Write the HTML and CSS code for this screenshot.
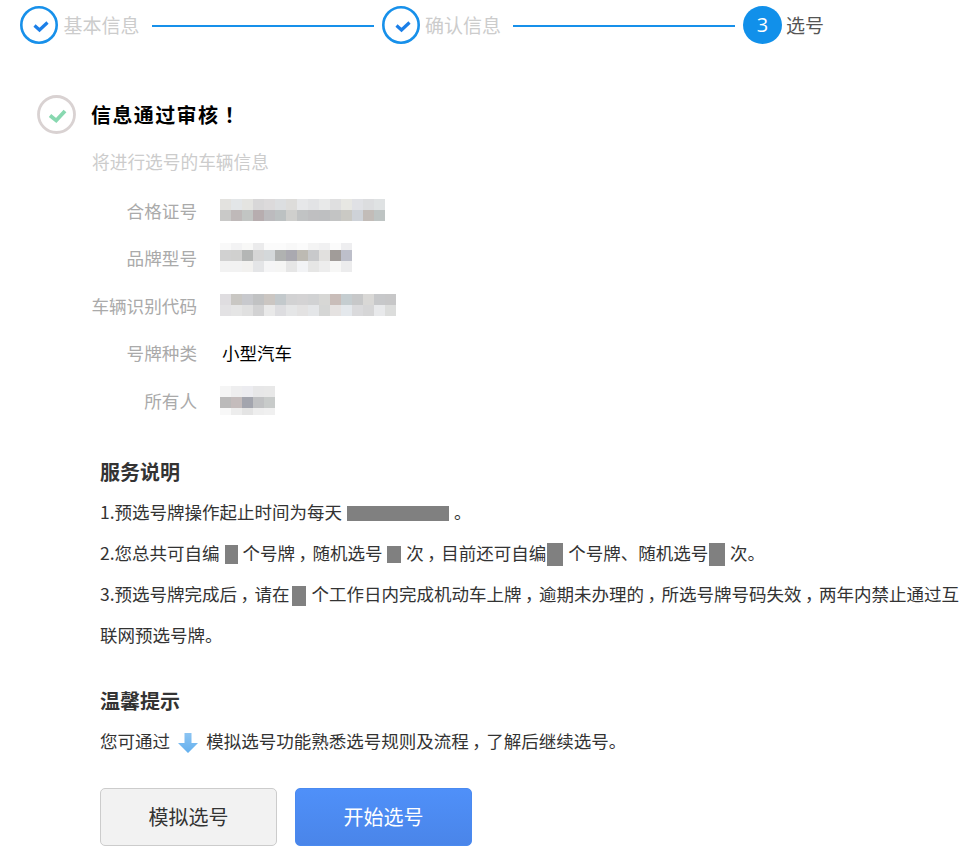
FILE: index.html
```html
<!DOCTYPE html>
<html lang="zh-CN">
<head>
<meta charset="utf-8">
<title>选号</title>
<link rel="stylesheet" href="styles.css">
</head>
<body>
<div class="steps">
  <svg class="step-icon" viewBox="0 0 38 38"><circle cx="19" cy="19" r="17.7" fill="none" stroke="#1790ea" stroke-width="2.6"/><path d="M14.5 19.5l5 4.5 8-7.5" fill="none" stroke="#1b7fe8" stroke-width="3.2"/></svg>
  <span class="step-text done">基本信息</span>
  <span class="step-line"></span>
  <svg class="step-icon" viewBox="0 0 38 38"><circle cx="19" cy="19" r="17.7" fill="none" stroke="#1790ea" stroke-width="2.6"/><path d="M14.5 19.5l5 4.5 8-7.5" fill="none" stroke="#1b7fe8" stroke-width="3.2"/></svg>
  <span class="step-text done">确认信息</span>
  <span class="step-line"></span>
  <span class="step-num">3</span>
  <span class="step-text current">选号</span>
</div>

<div class="result">
  <svg class="result-icon" viewBox="0 0 39 39"><circle cx="19.5" cy="19.5" r="18" fill="none" stroke="#d9d2d2" stroke-width="2.8"/><path d="M13 20.5l6.2 5L28 16" fill="none" stroke="#88d8b0" stroke-width="3.8"/></svg>
  <h1 class="result-title">信息通过审核<span class="title-mark">！</span></h1>
</div>
<p class="result-sub">将进行选号的车辆信息</p>

<div class="info">
  <div class="info-row"><span class="info-label">合格证号</span>
    <svg class="mosaic" width="165" height="22" viewBox="0 0 15 2" preserveAspectRatio="none" shape-rendering="crispEdges">
      <g>
        <rect x="0" y="0" width="1" height="1" fill="#e3e2df"/><rect x="1" y="0" width="1" height="1" fill="#e3e6e8"/><rect x="2" y="0" width="1" height="1" fill="#e4e4e1"/><rect x="3" y="0" width="1" height="1" fill="#d8d7d8"/><rect x="4" y="0" width="1" height="1" fill="#dcdadb"/><rect x="5" y="0" width="1" height="1" fill="#dcdee0"/><rect x="6" y="0" width="1" height="1" fill="#dddcda"/><rect x="7" y="0" width="1" height="1" fill="#e6e7e9"/><rect x="8" y="0" width="1" height="1" fill="#e2e3e5"/><rect x="9" y="0" width="1" height="1" fill="#e8e9e9"/><rect x="10" y="0" width="1" height="1" fill="#dfdfe0"/><rect x="11" y="0" width="1" height="1" fill="#e7e7e3"/><rect x="12" y="0" width="1" height="1" fill="#e0e1e5"/><rect x="13" y="0" width="1" height="1" fill="#dcdddf"/><rect x="14" y="0" width="1" height="1" fill="#dfe2e3"/>
        <rect x="0" y="1" width="1" height="1" fill="#c9c9c8"/><rect x="1" y="1" width="1" height="1" fill="#bfb9b9"/><rect x="2" y="1" width="1" height="1" fill="#c2c5c3"/><rect x="3" y="1" width="1" height="1" fill="#b7adaf"/><rect x="4" y="1" width="1" height="1" fill="#bcbbbe"/><rect x="5" y="1" width="1" height="1" fill="#bcc1c2"/><rect x="6" y="1" width="1" height="1" fill="#cfcfcd"/><rect x="7" y="1" width="1" height="1" fill="#c1c3c4"/><rect x="8" y="1" width="1" height="1" fill="#bfbfc1"/><rect x="9" y="1" width="1" height="1" fill="#bebfc1"/><rect x="10" y="1" width="1" height="1" fill="#c3c4c4"/><rect x="11" y="1" width="1" height="1" fill="#cac9c4"/><rect x="12" y="1" width="1" height="1" fill="#ced2d8"/><rect x="13" y="1" width="1" height="1" fill="#c2bcb8"/><rect x="14" y="1" width="1" height="1" fill="#bec4c3"/>
      </g>
    </svg>
  </div>
  <div class="info-row"><span class="info-label">品牌型号</span>
    <svg class="mosaic" width="132" height="29" viewBox="0 0 132 29" shape-rendering="crispEdges">
      <g>
        <rect x="0" y="0" width="11" height="7" fill="#f9f9f9"/><rect x="11" y="0" width="11" height="7" fill="#f3f3f4"/><rect x="22" y="0" width="11" height="7" fill="#f8f8f7"/><rect x="33" y="0" width="11" height="7" fill="#ebebec"/><rect x="44" y="0" width="11" height="7" fill="#fbfbfb"/><rect x="55" y="0" width="11" height="7" fill="#fbfbfb"/><rect x="66" y="0" width="11" height="7" fill="#f8f8f8"/><rect x="77" y="0" width="11" height="7" fill="#fbfbfb"/><rect x="88" y="0" width="11" height="7" fill="#f4f4f4"/><rect x="99" y="0" width="11" height="7" fill="#f1f1f2"/><rect x="110" y="0" width="11" height="7" fill="#fbfbfb"/><rect x="121" y="0" width="11" height="7" fill="#eeeef0"/>
        <rect x="0" y="7" width="11" height="11" fill="#d1d1d1"/><rect x="11" y="7" width="11" height="11" fill="#d0d0cf"/><rect x="22" y="7" width="11" height="11" fill="#b4b6b5"/><rect x="33" y="7" width="11" height="11" fill="#d6d6d6"/><rect x="44" y="7" width="11" height="11" fill="#d4d8da"/><rect x="55" y="7" width="11" height="11" fill="#b0b2b1"/><rect x="66" y="7" width="11" height="11" fill="#aaa9b0"/><rect x="77" y="7" width="11" height="11" fill="#bdbab3"/><rect x="88" y="7" width="11" height="11" fill="#c8c9cb"/><rect x="99" y="7" width="11" height="11" fill="#e1e0de"/><rect x="110" y="7" width="11" height="11" fill="#a19c99"/><rect x="121" y="7" width="11" height="11" fill="#bdbfca"/>
        <rect x="0" y="18" width="11" height="11" fill="#f2f2f2"/><rect x="11" y="18" width="11" height="11" fill="#f2f2f2"/><rect x="22" y="18" width="11" height="11" fill="#f2f1ef"/><rect x="33" y="18" width="11" height="11" fill="#e4e5e7"/><rect x="44" y="18" width="11" height="11" fill="#f5f5f6"/><rect x="55" y="18" width="11" height="11" fill="#f5f5f4"/><rect x="66" y="18" width="11" height="11" fill="#e6e6e6"/><rect x="77" y="18" width="11" height="11" fill="#f2f3f5"/><rect x="88" y="18" width="11" height="11" fill="#e6e6e5"/><rect x="99" y="18" width="11" height="11" fill="#ededed"/><rect x="110" y="18" width="11" height="11" fill="#f7f7f6"/><rect x="121" y="18" width="11" height="11" fill="#ececed"/>
      </g>
    </svg>
  </div>
  <div class="info-row"><span class="info-label">车辆识别代码</span>
    <svg class="mosaic" width="176" height="22" viewBox="0 0 16 2" preserveAspectRatio="none" shape-rendering="crispEdges">
      <g>
        <rect x="0" y="0" width="1" height="1" fill="#dfdde0"/><rect x="1" y="0" width="1" height="1" fill="#c9c7c3"/><rect x="2" y="0" width="1" height="1" fill="#c8c9cd"/><rect x="3" y="0" width="1" height="1" fill="#c1c2c3"/><rect x="4" y="0" width="1" height="1" fill="#cbc6c2"/><rect x="5" y="0" width="1" height="1" fill="#c3c9cc"/><rect x="6" y="0" width="1" height="1" fill="#d2d2d3"/><rect x="7" y="0" width="1" height="1" fill="#d4d3d4"/><rect x="8" y="0" width="1" height="1" fill="#d1d2d3"/><rect x="9" y="0" width="1" height="1" fill="#d7d7d5"/><rect x="10" y="0" width="1" height="1" fill="#c9bdb9"/><rect x="11" y="0" width="1" height="1" fill="#c5cdd0"/><rect x="12" y="0" width="1" height="1" fill="#c7c8c9"/><rect x="13" y="0" width="1" height="1" fill="#d9d8d6"/><rect x="14" y="0" width="1" height="1" fill="#c7c8ca"/><rect x="15" y="0" width="1" height="1" fill="#c7c7c8"/>
        <rect x="0" y="1" width="1" height="1" fill="#e3e2e4"/><rect x="1" y="1" width="1" height="1" fill="#e5e5e5"/><rect x="2" y="1" width="1" height="1" fill="#e0e0e0"/><rect x="3" y="1" width="1" height="1" fill="#d2d2d3"/><rect x="4" y="1" width="1" height="1" fill="#e9e9e9"/><rect x="5" y="1" width="1" height="1" fill="#dddde0"/><rect x="6" y="1" width="1" height="1" fill="#e5e6e7"/><rect x="7" y="1" width="1" height="1" fill="#e3e2e2"/><rect x="8" y="1" width="1" height="1" fill="#e4e6e8"/><rect x="9" y="1" width="1" height="1" fill="#d5d6d5"/><rect x="10" y="1" width="1" height="1" fill="#e5e2e1"/><rect x="11" y="1" width="1" height="1" fill="#e4e8ec"/><rect x="12" y="1" width="1" height="1" fill="#dadadc"/><rect x="13" y="1" width="1" height="1" fill="#d6d6d7"/><rect x="14" y="1" width="1" height="1" fill="#e8e9eb"/><rect x="15" y="1" width="1" height="1" fill="#dcdddc"/>
      </g>
    </svg>
  </div>
  <div class="info-row"><span class="info-label">号牌种类</span><span class="info-value">小型汽车</span></div>
  <div class="info-row"><span class="info-label">所有人</span>
    <svg class="mosaic" width="55" height="29" viewBox="0 0 55 29" shape-rendering="crispEdges">
      <g>
        <rect x="0" y="0" width="11" height="11" fill="#f5f5f5"/><rect x="11" y="0" width="11" height="11" fill="#eeeeef"/><rect x="22" y="0" width="11" height="11" fill="#ececf0"/><rect x="33" y="0" width="11" height="11" fill="#e7e7e8"/><rect x="44" y="0" width="11" height="11" fill="#e8e8e8"/>
        <rect x="0" y="11" width="11" height="11" fill="#bbbaba"/><rect x="11" y="11" width="11" height="11" fill="#c4bcbc"/><rect x="22" y="11" width="11" height="11" fill="#a3a5ae"/><rect x="33" y="11" width="11" height="11" fill="#c0c1c3"/><rect x="44" y="11" width="11" height="11" fill="#c8cbca"/>
        <rect x="0" y="22" width="11" height="7" fill="#f8f8f8"/><rect x="11" y="22" width="11" height="7" fill="#ededed"/><rect x="22" y="22" width="11" height="7" fill="#e4e4e4"/><rect x="33" y="22" width="11" height="7" fill="#eeeeee"/><rect x="44" y="22" width="11" height="7" fill="#f0f0f0"/>
      </g>
    </svg>
  </div>
</div>

<section class="notes">
  <h2 class="notes-title">服务说明</h2>
  <div class="notes-body">
    <p class="notes-line">1.预选号牌操作起止时间为每天 <span class="redact redact-time"></span> 。</p>
    <p class="notes-line">2.您总共可自编 <span class="redact redact-a"></span> 个号牌<span class="comma">，</span>随机选号 <span class="redact redact-b"></span> 次<span class="comma">，</span>目前还可自编<span class="redact redact-c"></span> 个号牌、随机选号<span class="redact redact-c"></span> 次。</p>
    <p class="notes-line">3.预选号牌完成后<span class="comma">，</span>请在<span class="redact redact-d"></span> 个工作日内完成机动车上牌<span class="comma">，</span>逾期未办理的<span class="comma">，</span>所选号牌号码失效<span class="comma">，</span>两年内禁止通过互<span>联网预选号牌。</span></p>
  </div>
</section>

<section class="tips">
  <h2 class="notes-title">温馨提示</h2>
  <p class="tips-line">您可通过
    <svg class="tips-arrow" viewBox="0 0 20 20"><defs><linearGradient id="arrowFill" x1="0" y1="0" x2="0" y2="1"><stop offset="0" stop-color="#8cc4f2"/><stop offset="1" stop-color="#64b0ee"/></linearGradient></defs><path d="M6.5 0h7v10H20L10 20 0 10h6.5z" fill="url(#arrowFill)"/></svg>
    模拟选号功能熟悉选号规则及流程<span class="comma">，</span>了解后继续选号。</p>
  <div class="actions">
    <button class="btn btn-plain" type="button">模拟选号</button>
    <button class="btn btn-primary" type="button">开始选号</button>
  </div>
</section>
</body>
</html>
```
FILE: styles.css
```css
* { box-sizing: border-box; }
html, body { margin: 0; padding: 0; background: #fff; }
body {
  width: 965px;
  height: 852px;
  overflow: hidden;
  font-family: "Noto Sans CJK SC", "Liberation Sans", sans-serif;
  color: #333;
}
p, h1, h2 { margin: 0; }

.steps {
  display: flex;
  align-items: center;
  height: 38px;
  margin-top: 6px;
  padding-left: 20px;
}
.step-icon { width: 38px; height: 38px; flex: none; }
.step-text { font-size: 19px; line-height: 38px; width: 80px; margin-left: 5.5px; flex: none; }
.step-text.done { color: #ccc; }
.step-text.current { color: #555; margin-left: 4px; }
.step-line { width: 222px; height: 2px; background: #1790ea; margin: 2px 8px 0 8px; flex: none; }
.step-num {
  width: 39px;
  height: 38px;
  border-radius: 50%;
  background: #1190ea;
  color: #fff;
  font: 20px/38px "Open Sans", sans-serif;
  text-align: center;
  flex: none;
}

.result { display: flex; align-items: center; margin-top: 51px; padding-left: 37px; height: 39px; }
.result-icon { width: 39px; height: 39px; flex: none; }
.result-title { font-size: 20px; line-height: 39px; letter-spacing: 1.4px; font-weight: 700; color: #000; margin-left: 15px; }
.title-mark { margin-left: 5px; }
.result-sub { font-size: 17.7px; line-height: 26px; color: #ccc; margin: 14px 0 0 92px; }

.info { margin-top: 12.5px; }
.info-row { display: flex; align-items: center; height: 47.5px; }
.info-label { width: 197px; text-align: right; font-size: 17.6px; color: #aaa; flex: none; }
.info-value { margin-left: 25px; font-size: 17.5px; color: #000; }
.mosaic { display: block; margin-left: 23px; flex: none; }

.notes { margin-top: 32.5px; padding-left: 100px; }
.notes-title { font-size: 20px; line-height: 30px; font-weight: 700; color: #333; }
.notes-body { margin-top: 4px; }
.notes-line { font-size: 17.5px; line-height: 41px; color: #333; }
.comma { font-feature-settings: "halt"; margin: 0 5.25px 0 3.5px; }
.redact { display: inline-block; background: #808080; vertical-align: middle; margin: 0 1px; }
.redact-time { width: 102px; height: 15px; }
.redact-a { width: 13px; height: 19px; }
.redact-b { width: 14px; height: 17px; }
.redact-c { width: 16px; height: 23px; }
.redact-d { width: 14px; height: 20px; margin: 0 2px; }

.tips { margin-top: 31px; padding-left: 100px; }
.tips-line { font-size: 17.5px; line-height: 41px; margin-top: 4px; color: #333; }
.tips-arrow { width: 20px; height: 20px; vertical-align: -5px; margin: 0 4.5px 0 4px; }

.actions { display: flex; gap: 18px; margin-top: 27px; }
.btn {
  width: 177px;
  height: 58px;
  border-radius: 5px;
  font-family: inherit;
  font-size: 20px;
  cursor: pointer;
}
.btn-plain { background: #f2f2f2; border: 1px solid #ccc; color: #333; }
.btn-primary { background: linear-gradient(#4f90f9, #4a85e9); border: 1px solid #4a8af0; color: #fff; }
```
